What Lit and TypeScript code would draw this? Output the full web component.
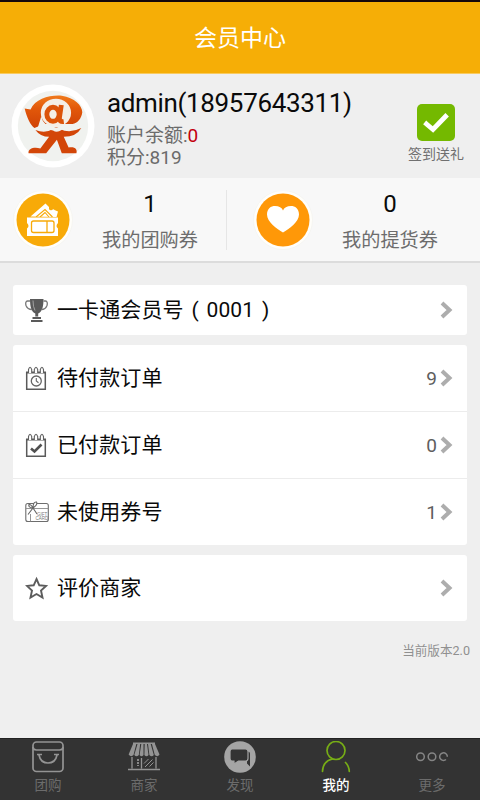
import { LitElement, html, css, svg } from "lit";
import { customElement } from "lit/decorators.js";
import { classMap } from "lit/directives/class-map.js";

const avatar = html`<svg class="avatar" viewBox="0 0 86 86">
  <defs><linearGradient id="fig" x1="0" y1="0" x2="0" y2="1">
    <stop offset="0" stop-color="#f07a1c"/><stop offset=".4" stop-color="#e2580a"/><stop offset="1" stop-color="#cf4206"/>
  </linearGradient></defs>
  <circle cx="43" cy="43" r="42.5" fill="#fff"/>
  <circle cx="43" cy="43" r="36" fill="#f0f2ef"/>
  <path d="M14 25 L20 26 C25 15 40 11 52 12 C65 14 73 22 73 29 C72 36 68 40 63 41 L34 41 L24 45 C20 42 16 34 14 25 Z" fill="url(#fig)"/>
  <path d="M25 47 Q35 51 43 46 Q46 43 50 46 Q60 51 72 45 Q67 54 54 54 L59 65 C66 64 68 67 67 71 L52 71 L47 57 L36 71 L18 71 C17 66 24 64 30 66 L39 54 Q30 54 25 47 Z" fill="#d34608"/>
  <path d="M31 33 Q33 44 46 45 Q53 45 57 42 Q49 52 43 47.500 Q38 46 33 48 L27 46 Z" fill="#f0f2ef"/>
  <ellipse cx="46" cy="29.500" rx="15.500" ry="14.500" fill="#f4eee6"/>
  <ellipse cx="43" cy="31" rx="6.300" ry="7.200" fill="none" stroke="#dc5309" stroke-width="5"/>
  <path d="M51.500 21.500 L49.500 35 Q50 39 54 38.500" fill="none" stroke="#dc5309" stroke-width="5"/>
</svg>`;

const checkBadge = html`<svg class="check" viewBox="0 0 38 37">
  <rect width="38" height="37" rx="5" fill="#74b900"/>
  <path d="M9.500 20 L16 25.500 L28.500 12.500" fill="none" stroke="#fff" stroke-width="4.800" stroke-linecap="square"/>
</svg>`;

const ticketArt = svg`
  <path d="M17.500 25.500 L32.500 12.500 L36 16 Q35.500 20 39 19 Q40.500 17.500 41.500 19 L45 20.500 L43.500 26 Z" fill="#fff"/>
  <path d="M23 26 L32 18.500 L39.500 26 M27 26 L32 21.500 L36 26" fill="none" stroke="#f8aa08" stroke-width="1.100"/>
  <path d="M14 26.500 H45 V32 Q42 35 45 37.500 V45 H14 V37.500 Q17 35 14 32 Z" fill="#fff"/>
  <rect x="18.500" y="30" width="22.500" height="11.500" rx="2" fill="none" stroke="#f8aa08" stroke-width="1.300"/>
  <path d="M34 30 V41.500" stroke="#f8aa08" stroke-width="1.300"/>`;

const heartArt = svg`<path d="M30 41.500 C24 38 14 31 14 23.500 C14 17.500 18 15 22 15 C26 15 29 16.500 30 19.500 C31 16.500 34 15 38 15 C42 15 46 17.500 46 23.500 C46 31 36 38 30 41.500 Z" fill="#fff"/>`;

const disc = (color: string, art: unknown) => html`<svg class="disc" viewBox="0 0 60 60">
  <circle cx="30" cy="29" r="29.500" fill="#fffefa" stroke="#f1f1ed" stroke-width=".6"/>
  <circle cx="30" cy="29" r="26.500" fill=${color}/>${art}
</svg>`;

const notebook = svg`
  <path d="M1.700 6 V23.300 H20.300 V6" fill="#fff" stroke="#5a5a5a" stroke-width="1.500"/>
  <path d="M1 6.500 H21" stroke="#5a5a5a" stroke-width="2"/>
  <g fill="#fff" stroke="#606060" stroke-width="1.100">
    <path d="M3.500 7 V3.500 Q5 -1 6.700 3.500 V7"/><path d="M9.300 7 V3.500 Q11 -1 12.700 3.500 V7"/><path d="M15.300 7 V3.500 Q17 -1 18.500 3.500 V7"/>
  </g>`;

const rowIcons: Record<string, unknown> = {
  trophy: svg`<g fill="#5a5a5a"><path d="M5 1 H18.500 C18.500 9 17 14 13.200 15.500 V18.500 H10.300 V15.500 C6.500 14 5 9 5 1 Z"/><path d="M7.500 19 H16 V21 H7.500 Z M6 22 H17.500 V24 H6 Z"/></g>
    <path d="M5 3 H2.500 Q0 3.500 1 7.500 Q2.500 11.500 7 11.500 M18.500 3 H20.500 Q23 3.500 22 7.500 Q20.500 11.500 16.500 11.500" fill="none" stroke="#777" stroke-width="1.300"/>
    <path d="M8 2.500 Q8 9 10 12.500" fill="none" stroke="#aaa" stroke-width=".9"/>`,
  clock: svg`${notebook}<circle cx="11.300" cy="15" r="5" fill="none" stroke="#666" stroke-width="1.300"/><path d="M11.300 12 V15 L13.500 16.800" fill="none" stroke="#666" stroke-width="1.100"/>`,
  done: svg`${notebook}<path d="M6 15.500 L9.500 18.500 L16.500 11.500" fill="none" stroke="#505050" stroke-width="2.600"/>`,
  gift: svg`<rect x=".8" y="3.500" width="22.500" height="18" rx="2" fill="none" stroke="#6d6d6d" stroke-width="1.100"/>
    <path d="M1 8.500 H23.500 M5.500 14 V21.500" stroke="#8a8a8a" stroke-width=".9"/>
    <path d="M8 8 Q3 7.500 4 4.500 Q6 4 8 8 Q8 1.500 11.500 2 Q13 4.500 8 8 L12 14 M8 8 L3 14.500" fill="#fff" stroke="#666" stroke-width="1.100"/>
    <text class="tiny" x="12" y="15.500">GIFT</text><text class="tiny" x="10.500" y="20">CARD</text>`,
  star: svg`<path d="M11.500 3 L14.300 9.300 L21 9.900 L16 14.500 L17.500 21.500 L11.500 18 L5.500 21.500 L7 14.500 L2 9.900 L8.700 9.300 Z" fill="none" stroke="#5c5c5c" stroke-width="1.900"/>`,
};

const tabIcons: Record<string, unknown> = {
  bag: svg`<rect x="1" y="1" width="30" height="29.500" rx="3.500"/><path d="M1 6 Q1 9 4.500 9 H27.500 Q31 9 31 6 M5 13.500 H10 M22 13.500 H27 M7 14 Q8.500 22 16 22 Q23.500 22 25 14"/>`,
  shop: svg`<g fill="#949494" stroke="none"><path d="M5 1.500 H27 V3 H5 Z"/><path d="M5 3 H8.300 L5.500 14 Q3 16.500 .6 13.500 Z"/><path d="M9.500 3 H12.200 L10.800 14 Q8.500 16.500 6.300 14 Z"/><path d="M13.300 3 H15.500 L15.500 14 Q13.500 16.500 11.600 14 Z"/><path d="M16.700 3 H19 L20.500 14 Q18.500 16.500 16.400 14 Z"/><path d="M20 3 H22.700 L25.800 14 Q23.700 16.500 21.400 14 Z"/><path d="M23.900 3 H27 L31.500 13.500 Q29.500 16.500 26.800 14 Z"/></g>
    <path d="M4 16 V27.500 M28 16 V27.500 M0 28.500 H32 M13.500 17 V27.500" stroke-width="1.300"/><path d="M10 18 V25" stroke-dasharray="2 1" stroke-width="1.800"/><path d="M16 22.500 L20.500 18 M17 26 L24.500 18.500 M21.500 25.500 L25.500 21.500" stroke-width="1"/>`,
  chat: svg`<circle cx="16" cy="16" r="15.800" fill="#a5a5a5" stroke="none"/><path d="M11.500 20 H23 V22.500 L26 25.500 V12.500 Q26 10.500 23.500 10.500" fill="#333" stroke="none"/><path d="M8 8 H21.500 Q24 8 24 10.500 V17.500 Q24 20 21.500 20 H14.500 L10 23 V20 H8 Q6 20 6 17.500 V10.500 Q6 8 8 8 Z" fill="#333" stroke="#a5a5a5" stroke-width="1.200"/>`,
  user: svg`<g stroke="#77ad16" stroke-width="1.700" stroke-linecap="round"><circle cx="16" cy="9.500" r="9"/><path d="M2.500 30.500 Q3 20 12.500 18 M25.500 21.500 Q29 25 29.300 30.500"/></g>`,
  more: svg`<g stroke="#858585" stroke-width="1.500"><circle cx="4.500" cy="15.800" r="3.800"/><circle cx="16" cy="15.800" r="3.800"/><path d="M30 18.500 A3.800 3.800 0 1 1 31.300 15.800"/></g>`,
};

const tabs = [
  { icon: "bag", label: "团购" },
  { icon: "shop", label: "商家" },
  { icon: "chat", label: "发现" },
  { icon: "user", label: "我的", active: true },
  { icon: "more", label: "更多" },
];

@customElement("app-root")
export class AppRoot extends LitElement {
  static styles = css`
    :host { display: flex; flex-direction: column; width: 480px; height: 800px; background: #efefef; overflow: hidden;
      font-family: Roboto, "Noto Sans CJK SC", sans-serif; color: #0a0a0a; }
    * { box-sizing: border-box; }
    svg { display: block; flex: none; }
    .header { height: 74px; flex: none; border-top: 2px solid #16070a; background: #f6ae06; border-bottom: 1px solid #f9cb60;
      color: #fff; font-size: 23px; line-height: 74px; text-align: center; }
    .profile { height: 104px; flex: none; display: flex; padding: 0 17px 0 11px; }
    .avatar { width: 84px; height: 84px; margin-top: 10px; }
    .who { margin: 13px 0 0 12px; flex: 1; color: #6b6b6b; font-size: 19px; white-space: nowrap; }
    .name { color: #0a0a0a; font-size: 26px; line-height: 32px; letter-spacing: -0.35px; }
    .line { line-height: 22px; }
    .line.first { margin-top: 6px; }
    .zero { color: #c3000e; }
    .sign { display: flex; flex-direction: column; align-items: center; padding-top: 30px; margin-right: -1px; font-size: 14px; line-height: 18px; color: #707070; }
    .check { width: 38px; height: 37px; margin-bottom: 4px; }
    .stats { height: 85px; flex: none; display: flex; background: #f8f8f8; border-bottom: 2px solid #dcdcdc; }
    .stat { display: flex; width: 240px; padding: 13px 0 0 13px; }
    .disc { width: 60px; height: 60px; }
    .figures { width: 154px; text-align: center; }
    .number { font-size: 24px; line-height: 28px; margin-top: -1px; }
    .caption { font-size: 19.2px; line-height: 26px; margin-top: 10px; color: #6d6d6d; }
    .divider { width: 1px; height: 60px; margin: 12px 13px 0 -14px; background: #e6e6e6; }
    .list { display: flex; flex-direction: column; gap: 10px; padding: 22px 13px 0; }
    .card { background: #fff; border-radius: 3px; }
    .row { display: flex; align-items: center; height: 66px; padding: 0 14px 0 12px; font-size: 21px; }
    .row.short { height: 50px; }
    .row + .row { height: 67px; border-top: 1px solid #ececec; }
    .row-icon { width: 24px; height: 25px; margin-right: 8px; }
    .label { flex: 1; line-height: 30px; white-space: pre; word-spacing: 2.5px; letter-spacing: 0.1px; }
    .count { font-size: 19px; color: #5e5e5e; margin-right: 3px; }
    .chevron { width: 13px; height: 18px; }
    .tiny { font: 4.5px "Liberation Sans", sans-serif; fill: #777; }
    .version { margin: 19px 10px 0 0; text-align: right; font-size: 12.6px; line-height: 21px; color: #909090; }
    .tabs { margin-top: auto; height: 62px; display: flex; background: #333; border-top: 1px solid #222; }
    .tab { flex: 1; display: flex; flex-direction: column; align-items: center; padding-top: 2px; font-size: 13.5px; line-height: 20px; color: #6c6c6c; }
    .tab.active { color: #fff; font-weight: 500; }
    .tab-icon { width: 32px; height: 32px; fill: none; stroke: #949494; stroke-width: 1.7; margin-bottom: 2px; }
  `;

  private row(icon: string, label: string, count = "", short = false) {
    return html`<div class=${classMap({ row: true, short })}>
      <svg class="row-icon" viewBox="0 0 24 25">${rowIcons[icon]}</svg>
      <span class="label">${label}</span>
      <span class="count">${count}</span>
      <svg class="chevron" viewBox="0 0 13 18"><path d="M2 2 L9.500 9 L2 16" fill="none" stroke="#adadad" stroke-width="4"/></svg>
    </div>`;
  }

  private stat(color: string, art: unknown, value: string, caption: string) {
    return html`<div class="stat">${disc(color, art)}
      <div class="figures"><div class="number">${value}</div><div class="caption">${caption}</div></div>
    </div>`;
  }

  render() {
    return html`
      <div class="header">会员中心</div>
      <div class="profile">
        ${avatar}
        <div class="who">
          <div class="name">admin(18957643311)</div>
          <div class="line first">账户余额:<span class="zero">0</span></div>
          <div class="line">积分:819</div>
        </div>
        <div class="sign">${checkBadge}<span>签到送礼</span></div>
      </div>
      <div class="stats">
        ${this.stat("#f8aa08", ticketArt, "1", "我的团购券")}
        <div class="divider"></div>
        ${this.stat("#ff9808", heartArt, "0", "我的提货券")}
      </div>
      <div class="list">
        <div class="card">${this.row("trophy", "一卡通会员号 ( 0001 )", "", true)}</div>
        <div class="card">
          ${this.row("clock", "待付款订单", "9")}
          ${this.row("done", "已付款订单", "0")}
          ${this.row("gift", "未使用券号", "1")}
        </div>
        <div class="card">${this.row("star", "评价商家")}</div>
      </div>
      <div class="version">当前版本2.0</div>
      <div class="tabs">
        ${tabs.map((t) => html`<div class=${classMap({ tab: true, active: !!t.active })}>
          <svg class="tab-icon" viewBox="0 0 32 32">${tabIcons[t.icon]}</svg><span>${t.label}</span>
        </div>`)}
      </div>`;
  }
}
